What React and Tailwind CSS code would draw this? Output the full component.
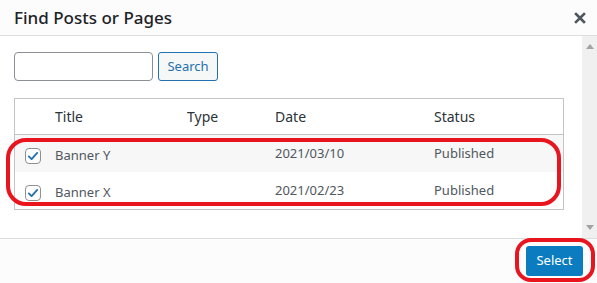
import React from 'react';

const rows = [
  { title: 'Banner Y', date: '2021/03/10', status: 'Published', bg: 'bg-[#f7f7f7]' },
  { title: 'Banner X', date: '2021/02/23', status: 'Published', bg: 'bg-white' },
];

const Check = () => (
  <span className="flex h-[16px] w-[16px] items-center justify-center rounded-[4px] border border-[#8c8f94] bg-white">
    <svg width="14" height="14" viewBox="0 0 20 20">
      <path d="M4 10.5l4 4 8-9" fill="none" stroke="#2271b1" strokeWidth="2.6" strokeLinecap="round" strokeLinejoin="round" />
    </svg>
  </span>
);

export default function App() {
  return (
    <div
      className="relative flex h-[283px] w-[597px] flex-col overflow-hidden bg-white text-[#50575e]"
      style={{ fontFamily: '"Noto Sans", "Open Sans", sans-serif' }}
    >
      {/* header */}
      <div className="flex h-[36px] shrink-0 items-center justify-between border-b border-[#dcdcde] bg-[#fcfcfc] pl-[14px] pr-[10px]">
        <h1 className="text-[17px] font-medium text-[#1d2327]">Find Posts or Pages</h1>
        <svg width="12" height="12" viewBox="0 0 12 12" className="mr-[1px]">
          <path d="M2 2l8 8M10 2l-8 8" stroke="#50575e" strokeWidth="2.6" strokeLinecap="square" />
        </svg>
      </div>

      {/* body */}
      <div className="flex flex-1">
        <div className="flex-1 pl-[14px] pr-[18px] pt-[16px]">
          <div className="flex gap-[5px]">
            <input className="h-[29px] w-[139px] rounded-[4px] border border-[#8c8f94] bg-white outline-none" />
            <button className="h-[29px] w-[60px] rounded-[3px] border border-[#2271b1] bg-[#f6f7f7] text-[13px] text-[#2271b1]">
              Search
            </button>
          </div>

          <div className="mt-[17px] w-[550px] border border-[#c3c4c7] text-[13px]">
            <div className="flex h-[36px] items-center border-b border-[#c3c4c7] text-[14px] text-[#2c3338]">
              <span className="w-[40px]" />
              <span className="w-[132px]">Title</span>
              <span className="w-[88px]">Type</span>
              <span className="w-[159px]">Date</span>
              <span>Status</span>
            </div>
            {rows.map((r) => (
              <div key={r.title} className={`flex h-[37px] items-center ${r.bg}`}>
                <span className="flex w-[40px] justify-start pl-[10px] pt-[5px]">
                  <Check />
                </span>
                <span className="w-[132px] pt-[5px]">{r.title}</span>
                <span className="w-[88px]" />
                <span className="w-[159px]">{r.date}</span>
                <span>{r.status}</span>
              </div>
            ))}
          </div>
        </div>

        {/* scrollbar */}
        <div className="flex w-[15px] flex-col items-center justify-between bg-[#f0f0f0] py-[8px]">
          <svg width="8" height="5" viewBox="0 0 8 5"><path d="M0 5L4 0L8 5Z" fill="#a3a3a3" /></svg>
          <svg width="8" height="5" viewBox="0 0 8 5"><path d="M0 0L4 5L8 0Z" fill="#a3a3a3" /></svg>
        </div>
      </div>

      {/* footer */}
      <div className="flex h-[45px] shrink-0 items-center justify-end border-t border-[#dcdcde] bg-[#fcfcfc] pr-[14px]">
        <button className="h-[30px] w-[57px] rounded-[3px] bg-[#0a7cbf] text-[13px] text-white">Select</button>
      </div>

      {/* annotations */}
      <div className="pointer-events-none absolute left-[6px] top-[138px] h-[68px] w-[555px] rounded-[20px] border-[4px] border-[#e8141e]" />
      <div className="pointer-events-none absolute left-[515px] top-[238px] h-[44px] w-[80px] rounded-[16px] border-[4px] border-[#e8141e]" />
    </div>
  );
}
